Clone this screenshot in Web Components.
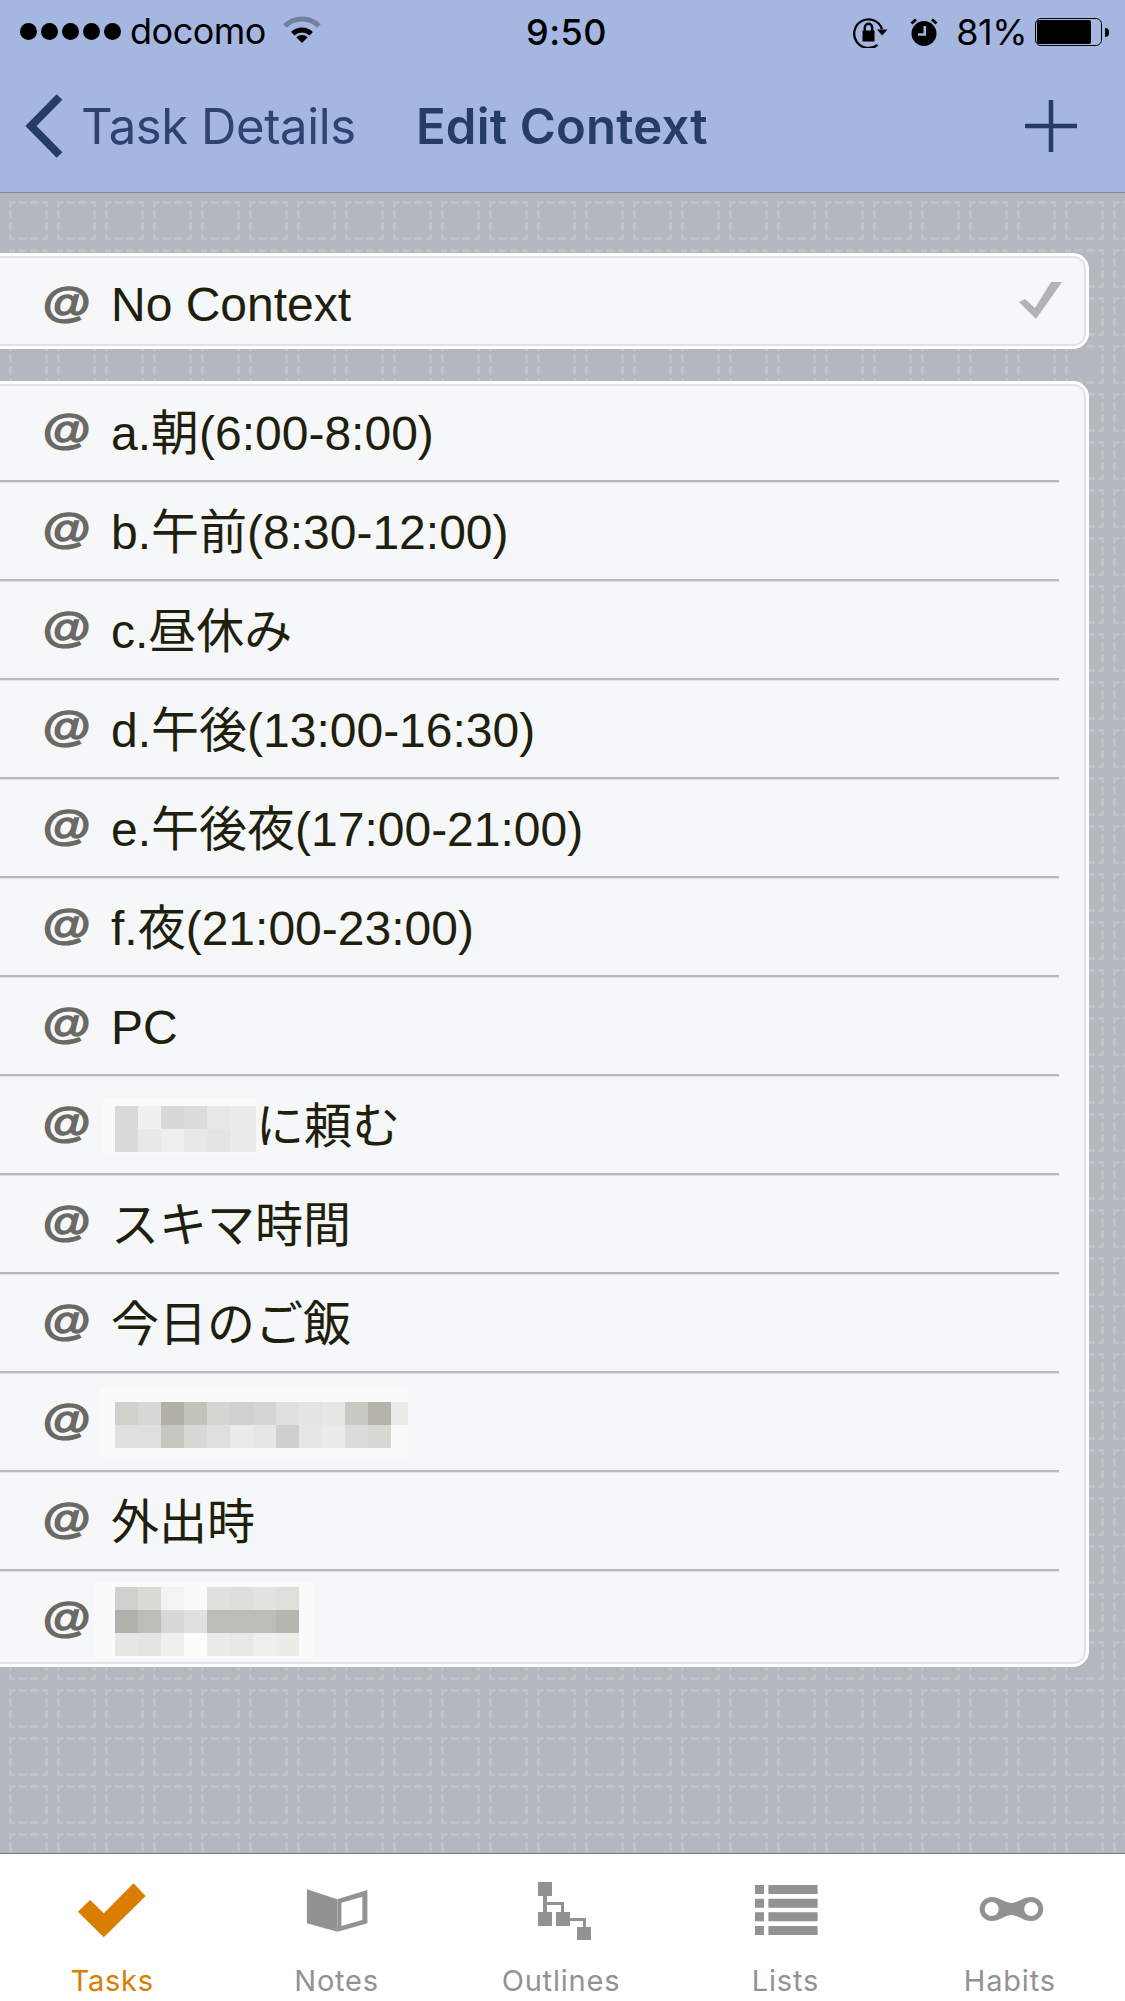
<!DOCTYPE html>
<html lang="ja">
<head>
<meta charset="utf-8">
<title>Edit Context</title>
<style>
  html, body { margin: 0; padding: 0; }
  body { font-family: "Liberation Sans", "Noto Sans CJK JP", sans-serif; }
</style>
</head>
<body>
<app-screen>
  <app-header slot="header">
    <status-bar></status-bar>
    <nav-bar back="Task Details" title="Edit Context"></nav-bar>
  </app-header>

  <context-card>
    <context-row checked>No Context</context-row>
  </context-card>

  <context-card>
    <context-row first>a.朝(6:00-8:00)</context-row>
    <context-row>b.午前(8:30-12:00)</context-row>
    <context-row>c.昼休み</context-row>
    <context-row>d.午後(13:00-16:30)</context-row>
    <context-row>e.午後夜(17:00-21:00)</context-row>
    <context-row>f.夜(21:00-23:00)</context-row>
    <context-row>PC</context-row>
    <context-row>
      <blur-block halo="12 8 0 1" lastcol="26" colors="#d9dad6,#f0f0ee,#d8d9d5,#dcdcd9,#e8e8e7,#ebebea;#d9dad6,#e9e9e7,#eeeeec,#e8e8e6,#e4e4e3,#ebebe9"></blur-block>に頼む
    </context-row>
    <context-row>スキマ時間</context-row>
    <context-row>今日のご飯</context-row>
    <context-row>
      <blur-block halo="15 14 0 9" lastcol="17" colors="#d0d1cb,#d8d9d5,#b0b0a6,#c2c3bb,#d5d6d1,#d0d1cc,#d4d5d0,#e0e1de,#e4e5e2,#e7e7e4,#c8c9c3,#b4b4ab,#ebebea;#e0e0dd,#dfdfdb,#c7c7c1,#d8d9d5,#dfe0dc,#ebebe8,#e6e6e3,#cfd0cb,#e6e6e4,#ebebea,#dcddd8,#d7d8d3,#fafafa"></blur-block>
    </context-row>
    <context-row>外出時</context-row>
    <context-row last>
      <blur-block halo="21 5 14 2" colors="#d0d1cc,#dadad7,#f3f3f2,#fbfbfa,#e0e1de,#dedfdc,#e2e2e0,#dfdfdc;#b0b1aa,#bcbdb7,#d8d9d5,#e0e0de,#bcbdb7,#bcbdb7,#bcbdb7,#b6b7b0;#e6e6e4,#e4e4e2,#f0f0ef,#fcfcfb,#ebebe9,#e8e8e6,#efefee,#ecece9"></blur-block>
    </context-row>
  </context-card>

  <tab-bar slot="footer">
    <tab-item label="Tasks" icon="tasks" active></tab-item>
    <tab-item label="Notes" icon="notes"></tab-item>
    <tab-item label="Outlines" icon="outlines"></tab-item>
    <tab-item label="Lists" icon="lists"></tab-item>
    <tab-item label="Habits" icon="habits"></tab-item>
  </tab-bar>
</app-screen>

<script>
const tile = "data:image/svg+xml," + encodeURIComponent(`<svg xmlns="http://www.w3.org/2000/svg" width="48" height="48" fill="#fff" fill-opacity=".16">
  <path d="M0 0h6v3H3v3H0zM9 0h9v3H9zM21 0h9v3h-9zM33 0h6v6h-3V3h-3zM0 9h3v9H0zM0 21h3v9H0zM36 9h3v9h-3zM36 21h3v9h-3zM0 33h3v3h3v3H0zM9 36h9v3H9zM21 36h9v3h-9zM36 33h3v6h-6v-3h3z"/>
</svg>`);

const tabIcons = {
  tasks: `<path d="M5.9 31.7 18.1 20 31.8 33.3 61.5 3.3 73.7 16 31.8 57.3z"/>`,
  notes: `<path d="M9.9 9.3 40.4 19.3V51.7L9.9 43.3z"/>
    <path fill-rule="evenodd" d="M40.4 19.3 70.4 10V43.3L40.4 51.7zM44.4 22.7V46L65.4 40V16.7z"/>`,
  outlines: `<path d="M17 2h14v14H17zM17 32h14v14H17zM35 32h14v14H35zM56 47h14v13H56z"/>
    <path d="M22 16h4v6h17v10h-3v-7H26v7h-4zM49 38h16v9h-3v-6H49z"/>`,
  lists: `<path d="M10 5h9v9h-9zM23.4 5h49.2v9H23.4zM10 18.8h9v9h-9zM23.4 18.8h49.2v9H23.4zM10 32.3h9v9h-9zM23.4 32.3h49.2v9H23.4zM10 46h9v9h-9zM23.4 46h49.2v9H23.4z"/>`,
  habits: `<path fill-rule="evenodd" d="M21.7 17C30 17 33 22 41.5 23 50 22 53 17 61.2 17A12 12 0 0 1 61.2 41C53 41 50 36 41.5 35 33 36 30 41 21.7 41A12 12 0 0 1 21.7 17ZM21.7 22A7 7 0 1 0 21.7 36 7 7 0 1 0 21.7 22ZM61.2 22A7 7 0 1 0 61.2 36 7 7 0 1 0 61.2 22Z"/>`
};

class AppScreen extends HTMLElement {
  constructor() {
    super();
    this.attachShadow({ mode: 'open' });
  }

  connectedCallback() {
    this.shadowRoot.innerHTML = `
      <style>
        :host {
          display: flex;
          flex-direction: column;
          width: 1125px;
          height: 2001px;
          overflow: hidden;
        }
        main {
          flex: 1;
          display: flex;
          flex-direction: column;
          gap: 32px;
          padding: 60px 36px 0 0;
          background: #b3b7be url('${tile}') 9px 8px;
        }
      </style>
      <slot name="header"></slot>
      <main><slot></slot></main>
      <slot name="footer"></slot>
    `;
  }
}

class AppHeader extends HTMLElement {
  constructor() {
    super();
    this.attachShadow({ mode: 'open' });
  }

  connectedCallback() {
    this.shadowRoot.innerHTML = `
      <style>
        :host {
          display: block;
          background: #a5b6e0;
          border-bottom: 1px solid #85878f;
        }
      </style>
      <slot></slot>
    `;
  }
}

class StatusBar extends HTMLElement {
  constructor() {
    super();
    this.attachShadow({ mode: 'open' });
  }

  connectedCallback() {
    this.shadowRoot.innerHTML = `
      <style>
        :host {
          display: grid;
          grid-template-columns: 526px auto 1fr;
          align-items: center;
          height: 60px;
          font: 400 36px/60px Inter, sans-serif;
          color: #000;
        }
        .left, .right { display: flex; align-items: center; }
        .dots { display: flex; gap: 4px; margin-left: 20px; }
        .dots i { width: 17px; height: 17px; border-radius: 50%; background: #000; }
        .carrier { margin-left: 9px; letter-spacing: -0.5px; }
        .wifi { margin-left: 17px; margin-top: -2px; }
        .time { font-weight: 500; letter-spacing: 0.5px; padding-top: 2px; }
        .right { justify-content: flex-end; padding-right: 17px; padding-top: 2px; }
        .pct { margin: 0 8px 0 18px; letter-spacing: -0.5px; }
        .rot { margin-right: 22px; }
        .battery {
          box-sizing: border-box;
          width: 67px;
          height: 28px;
          border: 1.5px solid #000;
          border-radius: 6px;
          padding: 1px;
          margin-right: 6px;
          position: relative;
        }
        .battery b { display: block; width: 54px; height: 100%; background: #000; border-radius: 2px; }
        .battery::after {
          content: '';
          position: absolute;
          right: -7.5px;
          top: 9px;
          width: 4px;
          height: 9px;
          background: #000;
          border-radius: 0 4px 4px 0;
        }
      </style>
      <div class="left">
        <div class="dots"><i></i><i></i><i></i><i></i><i></i></div>
        <span class="carrier">docomo</span>
        <svg class="wifi" width="38" height="28" viewBox="0 0 38 28">
          <path d="M2 10A24 24 0 0 1 36 10" fill="none" stroke="#000" stroke-opacity=".3" stroke-width="5"/>
          <path d="M9.8 17.8A13 13 0 0 1 28.2 17.8" fill="none" stroke="#000" stroke-width="5"/>
          <path d="M19 27 13.3 21.3A8 8 0 0 1 24.7 21.3Z"/>
        </svg>
      </div>
      <span class="time">9:50</span>
      <div class="right">
        <svg class="rot" width="35" height="32" viewBox="0 0 35 32">
          <path d="M24.5 28.8A14.3 14.3 0 1 1 29 13" fill="none" stroke="#000" stroke-width="2.3"/>
          <path d="M24 13.5H34.5L29.2 19.5Z"/>
          <path d="M9.5 14.5h12v11h-12z"/>
          <path d="M11.8 15V11.5a3.7 3.7 0 0 1 7.4 0V15" fill="none" stroke="#000" stroke-width="2.4"/>
        </svg>
        <svg width="28" height="28" viewBox="0 0 28 28">
          <circle cx="14" cy="15.5" r="12.5"/>
          <path d="M14.8 8V16.5H8" fill="none" stroke="#a5b6e0" stroke-width="2.6"/>
          <path d="M1.5 5.5 6 1.5M26.5 5.5 22 1.5" stroke="#000" stroke-width="3"/>
        </svg>
        <span class="pct">81%</span>
        <div class="battery"><b></b></div>
      </div>
    `;
  }
}

class NavBar extends HTMLElement {
  constructor() {
    super();
    this.attachShadow({ mode: 'open' });
  }

  connectedCallback() {
    const back = this.getAttribute('back');
    const title = this.getAttribute('title');

    this.shadowRoot.innerHTML = `
      <style>
        :host {
          display: flex;
          align-items: center;
          height: 132px;
          font: 400 49px/1 Inter, sans-serif;
          color: #253c66;
        }
        .chevron { margin-left: 25px; flex: none; }
        .back { margin-left: 18px; width: 335px; letter-spacing: -0.4px; color: #2d4470; }
        .title { font-weight: 600; letter-spacing: 0.2px; }
        .add { margin-left: auto; margin-right: 48px; flex: none; }
      </style>
      <svg class="chevron" width="38" height="64" viewBox="0 0 38 64">
        <path d="M34.5 3 6 32 34.5 61" fill="none" stroke="#253c66" stroke-width="8"/>
      </svg>
      <span class="back">${back}</span>
      <span class="title">${title}</span>
      <svg class="add" width="52" height="52" viewBox="0 0 52 52">
        <path d="M26 0V52M0 26H52" fill="none" stroke="#253c66" stroke-width="4.5"/>
      </svg>
    `;
  }
}

class ContextCard extends HTMLElement {
  constructor() {
    super();
    this.attachShadow({ mode: 'open' });
  }

  connectedCallback() {
    this.shadowRoot.innerHTML = `
      <style>
        :host {
          display: block;
          border: 3px solid #fff;
          border-left: 0;
          border-radius: 0 16px 16px 0;
          background: #fff;
        }
        .inner {
          border: 2px solid #dfe2e7;
          border-left: 0;
          border-radius: 0 13px 13px 0;
          background: #f5f7f9;
        }
      </style>
      <div class="inner"><slot></slot></div>
    `;
  }
}

class ContextRow extends HTMLElement {
  constructor() {
    super();
    this.attachShadow({ mode: 'open' });
  }

  connectedCallback() {
    const check = this.hasAttribute('checked')
      ? `<svg class="check" width="44" height="38" viewBox="0 0 44 38"><path d="M43 0 17 37 0 20 6 17 16 26 32 0Z" fill="#b0b4b6"/></svg>`
      : '';

    this.shadowRoot.innerHTML = `
      <style>
        :host {
          display: block;
          height: 99px;
          font-size: 48px;
          color: #201e0c;
        }
        :host([first]) { margin-top: -3px; }
        :host([last]) { height: 91px; }
        :host([checked]) { height: 86px; }
        .row {
          box-sizing: border-box;
          display: flex;
          align-items: center;
          height: 100%;
          padding-bottom: 6px;
          margin-right: 25px;
          border-bottom: 2px solid #b6bbc3;
          box-shadow: 0 1px 0 #dfe2e6;
        }
        :host([last]) .row, :host([checked]) .row {
          padding-bottom: 0;
          border-bottom: 0;
          box-shadow: none;
          margin-right: 0;
        }
        .at {
          flex: none;
          width: 44px;
          margin: 0 25px 0 42px;
          padding-top: 4px;
          font: italic 700 49px/1 "Liberation Sans", sans-serif;
          color: #6a6963;
          text-align: center;
          -webkit-text-stroke: 1.6px #6a6963;
          transform: scaleY(.82);
        }
        .label {
          flex: 1;
          display: flex;
          align-items: center;
          line-height: 60px;
          padding-top: 10px;
          white-space: nowrap;
        }
        :host([checked]) .label { padding-top: 8px; }
        .check { margin-right: 21px; }
      </style>
      <div class="row">
        <span class="at">@</span>
        <span class="label"><slot></slot></span>
        ${check}
      </div>
    `;
  }
}

class BlurBlock extends HTMLElement {
  constructor() {
    super();
    this.attachShadow({ mode: 'open' });
  }

  connectedCallback() {
    const rows = this.getAttribute('colors').split(';').map((r) => r.split(','));
    const lastCol = this.getAttribute('lastcol') || 23;
    const [left, top, right, bottom] = this.getAttribute('halo').split(' ');
    const cols = `repeat(${rows[0].length - 1}, 23px) ${lastCol}px`;
    const cells = rows.flat().map((c) => `<i style="background:${c}"></i>`).join('');

    this.shadowRoot.innerHTML = `
      <style>
        :host {
          display: block;
          padding: ${top}px ${right}px ${bottom}px ${left}px;
          margin: -3px 0 0 ${4 - Number(left)}px;
          background: #fafafa;
        }
        .grid { display: grid; grid-template-columns: ${cols}; grid-auto-rows: 23px; }
      </style>
      <div class="grid">${cells}</div>
    `;
  }
}

class TabBar extends HTMLElement {
  constructor() {
    super();
    this.attachShadow({ mode: 'open' });
  }

  connectedCallback() {
    this.shadowRoot.innerHTML = `
      <style>
        :host {
          display: grid;
          grid-template-columns: repeat(5, 1fr);
          height: 147px;
          padding-right: 3px;
          background: #fff;
          border-top: 1px solid #77797f;
        }
      </style>
      <slot></slot>
    `;
  }
}

class TabItem extends HTMLElement {
  constructor() {
    super();
    this.attachShadow({ mode: 'open' });
  }

  connectedCallback() {
    const label = this.getAttribute('label');
    const icon = tabIcons[this.getAttribute('icon')];

    this.shadowRoot.innerHTML = `
      <style>
        :host {
          display: flex;
          flex-direction: column;
          align-items: center;
          padding-top: 26px;
          color: #929292;
          font: 400 29px/1 Inter, sans-serif;
          letter-spacing: 0.8px;
        }
        :host([active]) { color: #d97e00; }
        svg { display: block; fill: currentColor; }
        span { margin-top: 26px; }
      </style>
      <svg width="80" height="60" viewBox="0 0 80 60">${icon}</svg>
      <span>${label}</span>
    `;
  }
}

customElements.define('app-screen', AppScreen);
customElements.define('app-header', AppHeader);
customElements.define('status-bar', StatusBar);
customElements.define('nav-bar', NavBar);
customElements.define('context-card', ContextCard);
customElements.define('context-row', ContextRow);
customElements.define('blur-block', BlurBlock);
customElements.define('tab-bar', TabBar);
customElements.define('tab-item', TabItem);
</script>
</body>
</html>
